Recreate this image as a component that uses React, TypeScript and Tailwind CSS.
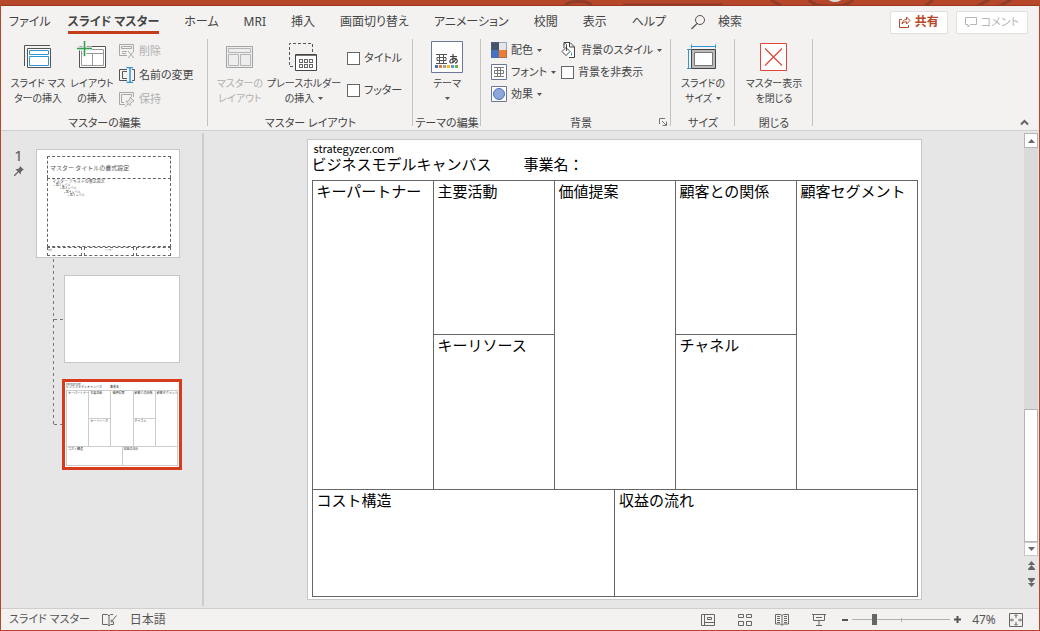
import React from 'react';

const UI_FONT = "font-['Noto_Sans','Noto_Sans_CJK_JP',sans-serif] [font-feature-settings:'palt']";
const SLIDE_FONT = "font-['Noto_Sans_CJK_JP',sans-serif] [font-feature-settings:normal]";

/* ---------- icons ---------- */

const SlideMasterIcon = () => (
  <svg width="32" height="32" viewBox="0 0 32 32" fill="none" aria-hidden="true">
    <path d="M2.5 25V4.5H28" stroke="#555" />
    <path d="M5.5 7.5h23v19h-23z" fill="#fff" stroke="#555" />
    <path d="M7.500 9.500h19v4h-19zM7.500 15.500h19v9h-19z" fill="#fff" stroke="#2f96d6" />
  </svg>
);

const LayoutInsertIcon = () => (
  <svg width="32" height="32" viewBox="0 0 32 32" fill="none" aria-hidden="true">
    <path d="M3.5 5.5h26v21h-26z" fill="#fff" stroke="#555" />
    <path d="M6 12.500h21M16.500 13v11M5.500 8.500h22v16h-22z" stroke="#999" />
    <path d="M8.500 0v16M1 7.500h15" stroke="#f3f2f1" strokeWidth="4" />
    <path d="M8.500 0v15M1 7.500h15" stroke="#2f9e4f" strokeWidth="1.500" />
  </svg>
);

const MasterLayoutIcon = () => (
  <svg width="32" height="32" viewBox="0 0 32 32" fill="none" aria-hidden="true">
    <path d="M2.500 5.500h26v21h-26z" fill="#eee" stroke="#a3a3a3" />
    <path d="M4.500 7.500h22v4h-22zM4.500 13.500h10v11h-10zM16.500 13.500h10v11h-10z" stroke="#b5b5b5" />
  </svg>
);

const PlaceholderIcon = () => (
  <svg width="32" height="32" viewBox="0 0 32 32" fill="none" aria-hidden="true">
    <path d="M5 25.500H1.500V2.500h23V14" stroke="#555" strokeDasharray="3 2" />
    <path d="M7.500 13.500h21v16h-21z" fill="#fff" stroke="#444" />
    <path d="M8 14.500h20" stroke="#777" />
    {[18, 23].map((y) =>
      [11, 16, 21].map((x) => (
        <rect key={`${x}-${y}`} x={x + 0.5} y={y + 0.5} width="3" height="3" stroke="#666" />
      ))
    )}
  </svg>
);

const ThemeIcon = () => (
  <svg width="32" height="32" viewBox="0 0 32 32" fill="none" aria-hidden="true">
    <path d="M.5.5h31v31H.5z" fill="#fff" stroke="#6b7799" />
    <path d="M5 13.500h11M5 22.500h11M8.500 13.500v9M12.500 13.500v9M6 16.500h9v3H6z" stroke="#555" />
    <path d="M19 15.500h7M22 13v8M25 17c-1 3-3 5-5 5s-1.500-4 2-4.500c5-.8 5.500 4 2 4.700" stroke="#444" strokeWidth="1.200" />
    {['#4472c4', '#ed7d31', '#a5a5a5', '#ffc000', '#5b9bd5', '#70ad47'].map((color, i) => (
      <rect key={color} x={4 + i * 4} y="24" width="3" height="3" fill={color} />
    ))}
  </svg>
);

const SlideSizeIcon = () => (
  <svg width="32" height="32" viewBox="0 0 32 32" fill="none" aria-hidden="true">
    <path d="M4 5.500h25M4.500 3.500v4M28.500 3.500v4M1.500 8v20M0 8.500h4M0 27.500h4" stroke="#2f96d6" />
    <path d="M4.500 8.500h24v19h-24z" fill="#bbb" stroke="#444" />
    <path d="M7.500 11.500h18v13h-18z" fill="#fff" stroke="#777" />
  </svg>
);

const CloseMasterIcon = () => (
  <svg width="32" height="32" viewBox="0 0 32 32" fill="none" aria-hidden="true">
    <path d="M2.500 2.500h26v27h-26z" fill="#fff" stroke="#e0473a" />
    <path d="M7 7.500l17 17M24 7.500l-17 17" stroke="#e0473a" strokeWidth="1.200" />
  </svg>
);

const DeleteIcon = () => (
  <svg width="16" height="16" viewBox="0 0 16 16" fill="none" stroke="#a8a8a8" aria-hidden="true">
    <path d="M8 12.500H.5V1.500h14V8M2.500 3.500h10v2h-10zM3 8.500h5M3 10.500h4" />
    <path d="M9 8l6 7M15 8l-6 7" />
  </svg>
);

const RenameIcon = () => (
  <svg width="16" height="16" viewBox="0 0 16 16" fill="none" aria-hidden="true">
    <path d="M8 13.500H.5V2.500H8M8 11.500H3.500V4.500H8M13 2.500h2.500v11H13" stroke="#555" />
    <path d="M7.500.5H10l1 1 1-1h2M11 1.500v13M7.500 15.500H10l1-1 1 1h2" stroke="#2f96d6" strokeWidth="1.500" />
  </svg>
);

const PreserveIcon = () => (
  <svg width="16" height="16" viewBox="0 0 16 16" fill="none" stroke="#a8a8a8" aria-hidden="true">
    <path d="M6 13.500H.5V1.500h14V6M5 11.500H2.500v-8h10V6" />
    <path d="M11 6l4 4-1.500.5-2 2-.5 2-4-4 2-.5 2-2zM9 13l-3 3" fill="#e4e4e4" />
  </svg>
);

const ColorsIcon = () => (
  <svg width="16" height="16" viewBox="0 0 16 16" aria-hidden="true">
    <path d="M0 0h8v8H0z" fill="#44546a" />
    <path d="M8 0h8v8H8z" fill="#e7e6e6" />
    <path d="M0 8h8v8H0z" fill="#4472c4" />
    <path d="M8 8h8v8H8z" fill="#ed7d31" />
    <path d="M.5.5h15v15H.5z" fill="none" stroke="#55648a" strokeOpacity=".5" />
  </svg>
);

const FontsIcon = () => (
  <svg width="16" height="16" viewBox="0 0 16 16" fill="none" aria-hidden="true">
    <path d="M.5.5h15v15H.5z" fill="#fff" stroke="#6b7799" />
    <path d="M3 3.500h10M3 12.500h10M6.500 3.500v9M9.500 3.500v9M3.500 6.500h9v3h-9z" stroke="#777" />
  </svg>
);

const EffectsIcon = () => (
  <svg width="16" height="16" viewBox="0 0 16 16" aria-hidden="true">
    <path d="M.5.5h15v15H.5z" fill="#fff" stroke="#6b7799" />
    <circle cx="8" cy="8" r="5.500" fill="#8ea6dc" stroke="#4c6fbf" />
  </svg>
);

const BackgroundStyleIcon = () => (
  <svg width="16" height="16" viewBox="0 0 16 16" fill="none" stroke="#444" aria-hidden="true">
    <path d="M3 3V.5h6L13.500 5v10.500H8M8.500.5V5h5" fill="#fff" />
    <path d="M5 5.500l4 4-4 4-4-4zM5.500 9V3c0-2-2.500-2-2.500 0v3" fill="#fff" />
    <path d="M10 10c1.500 2 1.500 3 0 4z" fill="#2f96d6" stroke="none" />
  </svg>
);

const Caret = () => (
  <svg width="5" height="3" viewBox="0 0 5 3" className="shrink-0" aria-hidden="true">
    <path d="M0 0h5L2.500 3z" fill="#555" />
  </svg>
);

const SearchIcon = () => (
  <svg width="15" height="16" viewBox="0 0 15 16" fill="none" stroke="#555" aria-hidden="true">
    <circle cx="9" cy="6" r="4.500" />
    <path d="M6 9.500L.5 15" strokeWidth="1.200" />
  </svg>
);

const ShareIcon = () => (
  <svg width="12" height="12" viewBox="0 0 12 12" fill="none" stroke="#b7472a" aria-hidden="true">
    <path d="M3 3.500H.5v8h9V9" />
    <path d="M3 8c.3-3 2-4.500 4.500-4.500V1L11 4.500 7.500 8V5.800C5.500 5.800 4 6.500 3 8z" />
  </svg>
);

const CommentIcon = () => (
  <svg width="12" height="12" viewBox="0 0 12 12" fill="none" stroke="#b5b5b5" aria-hidden="true">
    <path d="M.5 1.500h11v7h-6L3 11V8.500H.5z" />
  </svg>
);

const PinIcon = () => (
  <svg width="10" height="10" viewBox="0 0 10 10" fill="#666" aria-hidden="true">
    <path d="M6 0l4 4-1.500.3L7 6l-.3 2.500L4.600 6.300 1 10l-1 0 0-1 3.700-3.600L1.500 3.300 4 3l1.700-1.500z" />
  </svg>
);

/* ---------- ribbon ---------- */

const TABS = ['スライド マスター', 'ホーム', 'MRI', '挿入', '画面切り替え', 'アニメーション', '校閲', '表示', 'ヘルプ'];

interface RibbonGroupProps {
  label: string;
  className: string;
  launcher?: boolean;
  children: React.ReactNode;
}

const RibbonGroup: React.FC<RibbonGroupProps> = ({ label, className, launcher, children }) => (
  <section aria-label={label} className={`relative flex shrink-0 flex-col ${className}`}>
    <div className="flex flex-1 items-start pt-[5px]">{children}</div>
    <div className="whitespace-nowrap text-center leading-[14px]">{label}</div>
    <span className="absolute right-0 top-[3px] bottom-1 w-px bg-[#c3c2c1]" />
    {launcher && (
      <button aria-label="背景の書式設定" className="absolute bottom-1 right-1">
        <svg width="8" height="8" viewBox="0 0 8 8" fill="none" stroke="#777">
          <path d="M.5 6V.5H6M3 3l4 4M7.500 3.500v4h-4" />
        </svg>
      </button>
    )}
  </section>
);

interface BigButtonProps {
  icon: React.ReactNode;
  lines: string[];
  className: string;
  caret?: boolean;
  disabled?: boolean;
}

const BigButton: React.FC<BigButtonProps> = ({ icon, lines, className, caret, disabled }) => (
  <button
    disabled={disabled}
    className={`flex shrink-0 flex-col items-center whitespace-nowrap text-[10px] leading-[15px] disabled:text-[#b1b0af] ${className}`}
  >
    <span className="mb-[3px]">{icon}</span>
    {lines.map((line, i) => (
      <span key={i} className="flex h-[15px] items-center gap-1">
        {line}
        {caret && i === lines.length - 1 && <Caret />}
      </span>
    ))}
  </button>
);

interface SmallButtonProps {
  icon: React.ReactNode;
  label: string;
  caret?: boolean;
  disabled?: boolean;
}

const SmallButton: React.FC<SmallButtonProps> = ({ icon, label, caret, disabled }) => (
  <button disabled={disabled} className="flex items-center gap-1 whitespace-nowrap leading-4 disabled:text-[#b1b0af]">
    {icon}
    {label}
    {caret && <Caret />}
  </button>
);

const CheckItem: React.FC<{ label: string }> = ({ label }) => (
  <label className="flex items-center gap-1 whitespace-nowrap leading-4">
    <input type="checkbox" className="size-[13px] shrink-0 appearance-none border border-[#666] bg-white" />
    {label}
  </label>
);

const Ribbon = () => (
  <header className="border-b border-[#d0cfce] bg-[#f3f2f1] text-[#444]">
    <div className="flex h-[30px] items-center pr-[11px] pt-[2px] text-[12px]">
      <nav className="flex items-center gap-[25px] whitespace-nowrap pl-2">
        <button className="-mr-2">ファイル</button>
        {TABS.map((tab, i) => (
          <button
            key={tab}
            className={i === 0 ? 'border-b-3 border-[#c43e1c] pt-[3px] leading-[18px] font-bold' : 'leading-[18px]'}
          >
            {tab}
          </button>
        ))}
        <button className="flex items-center gap-3">
          <SearchIcon />
          検索
        </button>
      </nav>
      <div className="ml-auto flex gap-2">
        <button className="flex h-[23px] items-center gap-1 rounded-xs border border-[#e1dfdd] bg-white px-2 font-bold text-[#b7472a]">
          <ShareIcon />
          共有
        </button>
        <button
          disabled
          className="flex h-[23px] items-center gap-1 rounded-xs border border-[#e1dfdd] bg-white px-2 text-[11px] text-[#b5b5b5]"
        >
          <CommentIcon />
          コメント
        </button>
      </div>
    </div>

    <div className="flex h-[94px] text-[11px]">
      <RibbonGroup label="マスターの編集" className="w-[207px]">
        <BigButton className="ml-2 w-[58px]" icon={<SlideMasterIcon />} lines={['スライド マス', 'ターの挿入']} />
        <BigButton className="w-[50px]" icon={<LayoutInsertIcon />} lines={['レイアウト', 'の挿入']} />
        <div className="flex flex-col gap-2 pl-[2px] pt-[2px]">
          <SmallButton icon={<DeleteIcon />} label="削除" disabled />
          <SmallButton icon={<RenameIcon />} label="名前の変更" />
          <SmallButton icon={<PreserveIcon />} label="保持" disabled />
        </div>
      </RibbonGroup>
      <RibbonGroup label="マスター レイアウト" className="w-[205px]">
        <BigButton className="ml-2 w-[48px]" icon={<MasterLayoutIcon />} lines={['マスターの', 'レイアウト']} disabled />
        <BigButton className="w-[80px]" icon={<PlaceholderIcon />} lines={['プレースホルダー', 'の挿入']} caret />
        <div className="flex flex-col gap-4 pl-[3px] pt-[9px]">
          <CheckItem label="タイトル" />
          <CheckItem label="フッター" />
        </div>
      </RibbonGroup>
      <RibbonGroup label="テーマの編集" className="w-[68px]">
        <BigButton className="w-full" icon={<ThemeIcon />} lines={['テーマ', '']} caret />
      </RibbonGroup>
      <RibbonGroup label="背景" className="w-[190px] pl-[10px]" launcher>
        <div className="flex w-[70px] shrink-0 flex-col items-start gap-[6px] pt-px">
          <SmallButton icon={<ColorsIcon />} label="配色" caret />
          <SmallButton icon={<FontsIcon />} label="フォント" caret />
          <SmallButton icon={<EffectsIcon />} label="効果" caret />
        </div>
        <div className="flex flex-col items-start gap-[6px] pt-px">
          <SmallButton icon={<BackgroundStyleIcon />} label="背景のスタイル" caret />
          <CheckItem label="背景を非表示" />
        </div>
      </RibbonGroup>
      <RibbonGroup label="サイズ" className="w-[64px]">
        <BigButton className="w-full" icon={<SlideSizeIcon />} lines={['スライドの', 'サイズ']} caret />
      </RibbonGroup>
      <RibbonGroup label="閉じる" className="w-[78px]">
        <BigButton className="w-full" icon={<CloseMasterIcon />} lines={['マスター表示', 'を閉じる']} />
      </RibbonGroup>
      <button aria-label="リボンを折りたたむ" className="ml-auto mr-[10px] self-end pb-1">
        <svg width="9" height="7" viewBox="0 0 9 7" fill="none" stroke="#666" strokeWidth="2">
          <path d="M1 5.500l3.500-3.500L8 5.500" />
        </svg>
      </button>
    </div>
  </header>
);

/* ---------- business model canvas ---------- */

const CELLS = [
  { title: 'キーパートナー', area: 'col-span-2 row-span-2' },
  { title: '主要活動', area: 'col-span-2' },
  { title: '価値提案', area: 'col-span-2 row-span-2' },
  { title: '顧客との関係', area: 'col-span-2' },
  { title: '顧客セグメント', area: 'col-span-2 row-span-2' },
  { title: 'キーリソース', area: 'col-span-2' },
  { title: 'チャネル', area: 'col-span-2' },
  { title: 'コスト構造', area: 'col-span-5' },
  { title: '収益の流れ', area: 'col-span-5' },
];

const BusinessModelCanvas: React.FC<{ mini?: boolean }> = ({ mini }) => (
  <div
    className={`flex h-full flex-col ${SLIDE_FONT} ${
      mini
        ? 'p-px pt-[2px] text-[3px] leading-[3px] text-[#333]'
        : 'pb-[2px] pl-1 pr-[3px] pt-[2px] text-[15px] leading-5 text-black'
    }`}
  >
    <div className={mini ? 'text-[2px] leading-[2px]' : 'pl-[2px] text-[11px] leading-[13px]'}>strategyzer.com</div>
    <div className={mini ? 'flex gap-2 pb-px' : 'flex gap-8 pb-[7px] leading-[18px]'}>
      <span>ビジネスモデルキャンバス</span>
      <span>事業名：</span>
    </div>
    <div
      className={`grid flex-1 grid-cols-10 grid-rows-[155fr_155fr_108fr] border-l border-t ${
        mini ? 'border-[#ccc]' : 'border-[#666]'
      }`}
    >
      {CELLS.map((cell) => (
        <div
          key={cell.title}
          className={`min-w-0 whitespace-nowrap border-b border-r ${cell.area} ${
            mini ? 'border-[#ccc] p-px' : 'border-[#666] px-1'
          }`}
        >
          {cell.title}
        </div>
      ))}
    </div>
  </div>
);

/* ---------- slide panel ---------- */

const MasterThumbnail = () => (
  <button
    aria-label="スライド マスター 1"
    className={`flex h-[109px] w-[144px] flex-col border border-[#c6c6c6] bg-white pb-px pl-[10px] pr-2 pt-[6px] text-left text-[#555] ${SLIDE_FONT}`}
  >
    <span className="flex h-[22px] w-full items-center border border-b-0 border-dashed border-[#666] pl-[2px] text-[6px]">
      マスター タイトルの書式設定
    </span>
    <span className="block w-full flex-1 border border-dashed border-[#666] pl-1 text-[3px] leading-[3px]">
      <span className="block text-[4px] leading-[4px]">マスター テキストの書式設定</span>
      <span className="block pl-[2px] pt-px">• 第 2 レベル</span>
      <span className="block pl-2">• 第 3 レベル</span>
      <span className="block pl-3 pt-px">• 第 4 レベル</span>
      <span className="block pl-4">• 第 5 レベル</span>
    </span>
    <span className="flex h-[9px] w-full gap-[2px] text-[2px] leading-[6px]">
      <span className="w-[35px] border border-dashed border-[#666]">日付</span>
      <span className="flex-1 border border-dashed border-[#666] text-center">フッター</span>
      <span className="w-[35px] border border-dashed border-[#666] text-right">‹#›</span>
    </span>
  </button>
);

const SlidePanel = () => (
  <aside className="my-[2px] flex w-[203px] shrink-0 border-r-2 border-[#cdcdcd] pt-4">
    <div className="flex w-[35px] shrink-0 flex-col items-center gap-[5px] text-[15px] leading-3 text-[#555]">
      <span>1</span>
      <PinIcon />
    </div>
    <div className="relative flex flex-col items-start">
      <MasterThumbnail />
      <div className="flex w-full flex-col items-end gap-4 pt-[17px]">
        <button aria-label="レイアウト 1" className="h-[88px] w-[116px] border border-[#c6c6c6] bg-white" />
        <button
          aria-label="レイアウト 2"
          className="-mr-[2px] h-[91px] w-[120px] border-3 border-[#d83b1c] bg-white text-left"
        >
          <BusinessModelCanvas mini />
        </button>
      </div>
      {/* connector from the master down to its layouts */}
      <svg className="absolute left-4 top-[110px]" width="11" height="168" fill="none" stroke="#777" strokeDasharray="3 3">
        <path d="M1.500 0v166M2 60.500h9M2 165.500h8" />
      </svg>
    </div>
  </aside>
);

/* ---------- editing stage ---------- */

const Triangle: React.FC<{ up?: boolean }> = ({ up }) => (
  <svg width="7" height="4" viewBox="0 0 7 4" fill="#666" aria-hidden="true">
    <path d={up ? 'M0 4h7L3.500 0z' : 'M0 0h7L3.500 4z'} />
  </svg>
);

const ScrollBar = () => (
  <div className="my-[2px] mr-px flex w-[14px] shrink-0 flex-col">
    <button aria-label="上へ" className="flex h-[15px] items-center justify-center border border-[#b5b5b5] bg-white">
      <Triangle up />
    </button>
    <div className="flex flex-1 flex-col bg-[#dadada]">
      <div className="flex-2" />
      <div className="flex-1 border border-[#b5b5b5] bg-white" />
    </div>
    <button aria-label="下へ" className="flex h-[14px] items-center justify-center border border-[#c6c6c6] bg-white">
      <Triangle />
    </button>
    <div className="flex h-[50px] flex-col items-center gap-2 pt-[5px]">
      <button aria-label="前のスライド">
        <svg width="7" height="9" viewBox="0 0 7 9" fill="#666">
          <path d="M3.500 0L7 4H0zM3.500 4L7 8H0zM0 8h7v1H0z" />
        </svg>
      </button>
      <button aria-label="次のスライド">
        <svg width="7" height="9" viewBox="0 0 7 9" fill="#666">
          <path d="M0 0h7v1H0zM0 1h7L3.500 5zM0 5h7L3.500 9z" />
        </svg>
      </button>
    </div>
  </div>
);

const Stage = () => (
  <main className="flex min-w-0 flex-1">
    <div className="flex flex-1 justify-center pb-[7px] pt-2">
      <div className="aspect-[4/3] w-3/4 self-start border border-[#c8c8c8] bg-white">
        <BusinessModelCanvas />
      </div>
    </div>
    <ScrollBar />
  </main>
);

/* ---------- status bar ---------- */

const VIEW_ICONS = [
  { name: '標準', d: 'M.5 1.500h13v11H.5zM3.500 2v10M4 9.500h9M6.500 4.500h4v2h-4z' },
  { name: 'スライド一覧', d: 'M.5 1.500h5v3h-5zM8.500 1.500h5v3h-5zM.5 8.500h5v4h-5zM8.500 8.500h5v4h-5z' },
  { name: '閲覧表示', d: 'M7 2.500L5.500 1.500h-5v9.500h5L7 12.500l1.500-1.500h5V1.500h-5zV12M2 3.500h3M2 5.500h3M2 7.500h3M2 9.500h3M9 3.500h3M9 5.500h3M9 7.500h3M9 9.500h3' },
  { name: 'スライド ショー', d: 'M0 1.500h14M1.500 2v5.500h11V2M4 4.500h6M7 8v4M4 12.500h6' },
];

const StatusBar = () => (
  <footer className="flex h-[22px] items-center border-t border-[#cfcecd] bg-[#f3f2f1] px-2 text-[12px] text-[#555]">
    <span className="text-[11px]">スライド マスター</span>
    <button aria-label="スペル チェック" className="ml-3">
      <svg width="16" height="14" viewBox="0 0 16 14" fill="none" stroke="#666">
        <path d="M7 3L5.500 1.500h-5v10h5L7 13l1.500-1.500h3V9M7 3v10M7 3l1.500-1.500H11" />
        <path d="M14.500 2.500l-5 6M9 6.500l.5 2.500 2-.5" />
      </svg>
    </button>
    <button className="ml-3">日本語</button>

    <div className="ml-auto flex items-center gap-[23px]">
      {VIEW_ICONS.map((view) => (
        <button key={view.name} aria-label={view.name}>
          <svg width="14" height="14" viewBox="0 0 14 14" fill="none" stroke="#666">
            <path d={view.d} />
          </svg>
        </button>
      ))}
    </div>
    <div className="ml-4 flex items-center gap-1">
      <button aria-label="縮小" className="h-[2px] w-[6px] bg-[#555]" />
      <div className="relative flex items-center">
        <span className="absolute left-1/2 h-1 w-px bg-[#aaa]" />
        <input
          type="range"
          aria-label="ズーム"
          min={0}
          max={100}
          defaultValue={21}
          className="relative h-3 w-[98px] appearance-none bg-transparent [&::-webkit-slider-runnable-track]:h-px [&::-webkit-slider-runnable-track]:bg-[#b0b0b0] [&::-webkit-slider-thumb]:-mt-[5px] [&::-webkit-slider-thumb]:h-[11px] [&::-webkit-slider-thumb]:w-[5px] [&::-webkit-slider-thumb]:appearance-none [&::-webkit-slider-thumb]:bg-[#666]"
        />
      </div>
      <button aria-label="拡大">
        <svg width="7" height="7" viewBox="0 0 7 7" stroke="#555" strokeWidth="2">
          <path d="M0 3.500h7M3.500 0v7" />
        </svg>
      </button>
    </div>
    <button className="ml-[10px] w-[26px] whitespace-nowrap">47%</button>
    <button aria-label="ウィンドウに合わせる" className="ml-3 mr-2">
      <svg width="14" height="14" viewBox="0 0 14 14" fill="none" stroke="#666">
        <path d="M.5.5h13v13H.5zM7 2v3M7 9v3M2 7h3M9 7h3" />
        <path d="M5.500 3L7 1.500 8.500 3M5.500 11L7 12.500 8.500 11M3 5.500L1.500 7 3 8.500M11 5.500L12.500 7 11 8.500" />
      </svg>
    </button>
  </footer>
);

const TitleStrip = () => (
  <div className="flex h-[6px] justify-end overflow-hidden border-b border-[#98391f] bg-[#b7472a]">
    <svg width="480" height="6" viewBox="0 0 480 6" fill="none" stroke="#8f3d28" strokeWidth="3">
      <path d="M6 6c3-6 24-6 27 0M64 5h100" />
      <path d="M212 0l14 8M250 0c6 8 36 8 44 0M374 0l-8 6M430 0l-12 6M452 0l-12 6" />
      <ellipse cx="276" cy="-2" rx="7" ry="4" fill="#ddd" stroke="none" />
    </svg>
  </div>
);

export default function App() {
  return (
    <div className={`flex min-h-screen flex-col border-x border-b border-[#b7472a] bg-[#e6e6e6] ${UI_FONT}`}>
      <TitleStrip />
      <Ribbon />
      <div className="flex flex-1">
        <SlidePanel />
        <Stage />
      </div>
      <StatusBar />
    </div>
  );
}
